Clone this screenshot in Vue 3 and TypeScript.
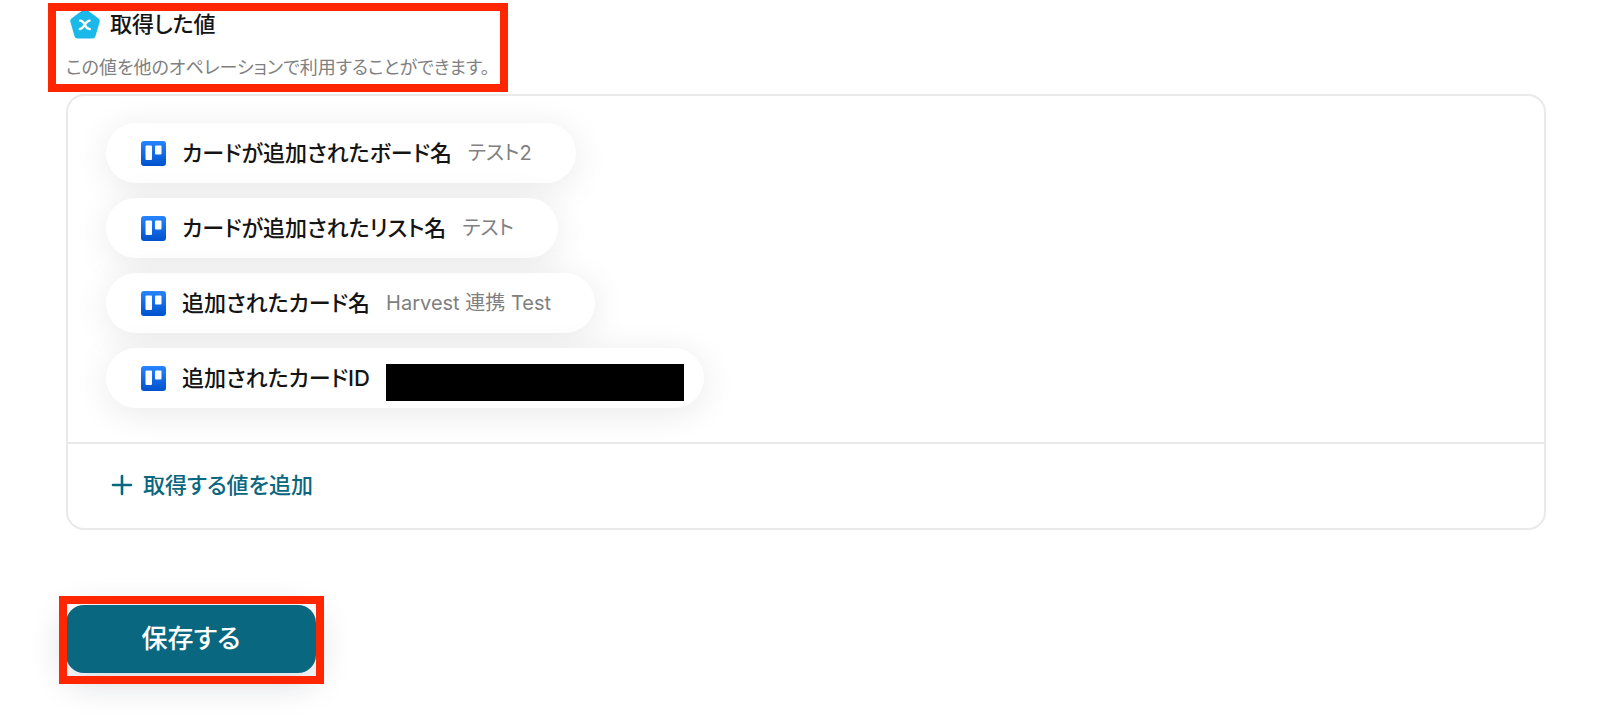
<script setup lang="ts">
interface CapturedValue {
  id: string
  name: string
  sample?: string
}

const values: CapturedValue[] = [
  { id: 'board', name: 'カードが追加されたボード名', sample: 'テスト2' },
  { id: 'list', name: 'カードが追加されたリスト名', sample: 'テスト' },
  { id: 'card', name: '追加されたカード名', sample: 'Harvest 連携 Test' },
  { id: 'card-id', name: '追加されたカードID' },
]
</script>

<template>
  <main class="page">
    <header class="heading callout">
      <h1 class="title">
        <svg class="badge" viewBox="0 0 32 32" aria-hidden="true">
          <path
            d="M16 4.2 27.8 12.8 23.6 27.4H8.4L4.2 12.8Z"
            fill="#1bb9ea"
            stroke="#1bb9ea"
            stroke-width="6"
            stroke-linejoin="round"
          />
          <g fill="none" stroke="#fff" stroke-width="2.4" stroke-linecap="round">
            <path d="M11 12.6C13.8 12.4 14.6 14.2 15.8 16.8S18 21.2 20.8 21" />
            <path d="M20.6 12.6C18.2 12.6 17.2 14.6 15.8 16.8S13.4 21.1 10.8 21" />
          </g>
        </svg>
        <span>取得した値</span>
      </h1>
      <p class="note">この値を他のオペレーションで利用することができます。</p>
    </header>

    <section class="panel">
      <ul class="values">
        <li v-for="item in values" :key="item.id" class="pill" :class="{ masked: !item.sample }">
          <svg class="board-icon" viewBox="0 0 25 25" aria-hidden="true">
            <defs>
              <linearGradient :id="`fill-${item.id}`" x1="0" y1="0" x2="0" y2="1">
                <stop offset="0" stop-color="#2684ff" />
                <stop offset="1" stop-color="#0052cc" />
              </linearGradient>
            </defs>
            <rect width="25" height="25" rx="3" :fill="`url(#fill-${item.id})`" />
            <rect x="4.5" y="4.5" width="6.5" height="14.5" rx="1" fill="#fff" />
            <rect x="14" y="4.5" width="6.5" height="9" rx="1" fill="#fff" />
          </svg>
          <span class="name">{{ item.name }}</span>
          <span v-if="item.sample" class="sample">{{ item.sample }}</span>
          <span v-else class="mask"></span>
        </li>
      </ul>
      <div class="footer">
        <button type="button" class="add">
          <svg class="plus" viewBox="0 0 22 22" aria-hidden="true">
            <path d="M11 2V20M2 11H20" stroke="#0a6780" stroke-width="2.6" stroke-linecap="round" />
          </svg>
          <span>取得する値を追加</span>
        </button>
      </div>
    </section>

    <div class="actions callout">
      <button type="button" class="save">保存する</button>
    </div>
  </main>
</template>

<style>
body {
  margin: 0;
  background: #fff;
}
</style>

<style scoped>
.page {
  padding: 0 54px 48px 66px;
  color: #141414;
  font-family: Inter, "Noto Sans CJK JP", sans-serif;
  font-feature-settings: "palt";
}

.callout {
  position: relative;
  width: fit-content;
}

.callout::after {
  content: "";
  position: absolute;
  border: 8px solid #ff2600;
  pointer-events: none;
}

.heading {
  height: 94px;
}

.heading::after {
  inset: 3px -18px 2px -18px;
}

.title {
  display: flex;
  align-items: center;
  gap: 9px;
  margin: 0;
  padding: 8px 0 0 3px;
  font-size: 22px;
  line-height: 32px;
  font-weight: 500;
}

.badge {
  width: 32px;
  height: 32px;
}

.note {
  margin: 14px 0 0;
  color: #808080;
  font-size: 18px;
  line-height: 28px;
}

.panel {
  border: 2px solid #e9e9e9;
  border-radius: 18px;
}

.values {
  display: flex;
  flex-direction: column;
  align-items: flex-start;
  gap: 15px;
  margin: 0;
  padding: 27px 38px 34px;
  list-style: none;
  overflow: hidden;
}

.pill {
  display: flex;
  align-items: center;
  box-sizing: border-box;
  height: 60px;
  padding: 0 44px 0 35px;
  border-radius: 30px;
  background: #fff;
  box-shadow: 0 5px 36px rgba(0, 0, 0, 0.09);
}

.masked {
  padding-right: 20px;
}

.board-icon {
  width: 25px;
  height: 25px;
  margin-right: 16px;
}

.name {
  font-size: 22px;
  line-height: 32px;
  font-weight: 500;
}

.sample {
  margin-left: 16px;
  color: #808080;
  font-size: 20px;
  line-height: 28px;
}

.mask {
  width: 298px;
  height: 37px;
  margin: 8px 0 0 16px;
  background: #000;
}

.footer {
  padding: 25px 43px 27px;
  border-top: 2px solid #e9e9e9;
}

button {
  border: 0;
  font-family: inherit;
  font-feature-settings: inherit;
  font-weight: 500;
  cursor: pointer;
}

.add {
  display: flex;
  align-items: center;
  gap: 10px;
  padding: 0;
  background: none;
  color: #0a6780;
  font-size: 22px;
  line-height: 32px;
}

.plus {
  width: 22px;
  height: 22px;
}

.actions {
  margin-top: 75px;
}

.actions::after {
  inset: -9px -8px -11px -7px;
}

.save {
  display: block;
  min-width: 250px;
  padding: 17px 24px;
  border-radius: 18px;
  background: #0a6780;
  box-shadow: 0 8px 36px rgba(20, 30, 60, 0.18);
  color: #fff;
  font-size: 26px;
  line-height: 34px;
}
</style>
